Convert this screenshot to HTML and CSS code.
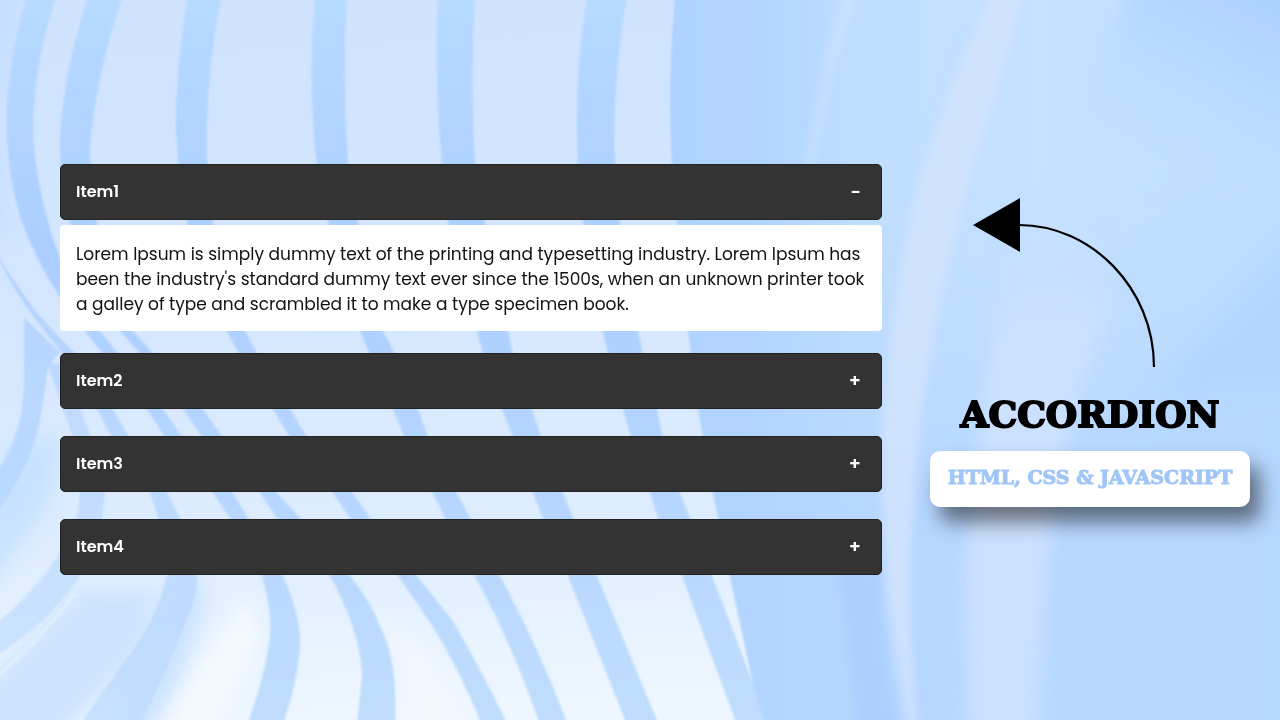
FILE: index.html
```html
<!DOCTYPE html>
<html lang="en">

<head>
    <meta charset="UTF-8">
    <meta name="viewport" content="width=device-width, initial-scale=1.0">
    <title>Accordion</title>
    <link rel="stylesheet" href="styles.css">
</head>

<body>
    <svg class="background" viewBox="0 0 1280 720" preserveAspectRatio="xMidYMid slice" aria-hidden="true">
        <defs>
            <linearGradient id="base" x1="0.1" y1="0" x2="0.2" y2="1">
                <stop offset="0" stop-color="#cfe3ff" />
                <stop offset="0.4" stop-color="#d4e6ff" />
                <stop offset="0.75" stop-color="#deedfe" />
                <stop offset="1" stop-color="#eef6ff" />
            </linearGradient>
            <linearGradient id="stripe" gradientUnits="userSpaceOnUse" x1="0" y1="0" x2="0" y2="720">
                <stop offset="0" stop-color="#b7daff" />
                <stop offset="0.35" stop-color="#abceff" />
                <stop offset="0.65" stop-color="#b5d5ff" />
                <stop offset="1" stop-color="#c0ddfd" />
            </linearGradient>
            <linearGradient id="sheet" gradientUnits="userSpaceOnUse" x1="670" y1="0" x2="1280" y2="0">
                <stop offset="0" stop-color="#afd3ff" />
                <stop offset="0.12" stop-color="#b0d3ff" />
                <stop offset="0.32" stop-color="#bfdeff" />
                <stop offset="0.6" stop-color="#c5e1ff" />
                <stop offset="1" stop-color="#c0dfff" />
            </linearGradient>
            <linearGradient id="sheetShade" x1="0" y1="0" x2="0.2" y2="1">
                <stop offset="0.4" stop-color="#b2d4ff" stop-opacity="0" />
                <stop offset="0.75" stop-color="#b2d4ff" stop-opacity="0.7" />
                <stop offset="1" stop-color="#b2d4ff" stop-opacity="0.7" />
            </linearGradient>
            <linearGradient id="corner" x1="1" y1="0" x2="0.5" y2="1">
                <stop offset="0" stop-color="#a9ceff" />
                <stop offset="0.4" stop-color="#b6d8ff" />
                <stop offset="0.9" stop-color="#c2dfff" stop-opacity="0" />
            </linearGradient>
            <linearGradient id="band" x1="0" y1="0" x2="0" y2="1">
                <stop offset="0" stop-color="#cce1ff" stop-opacity="0" />
                <stop offset="0.3" stop-color="#cce1ff" />
                <stop offset="1" stop-color="#cce1ff" />
            </linearGradient>
            <filter id="edge" x="-20%" y="-20%" width="140%" height="140%">
                <feGaussianBlur stdDeviation="1.2" />
            </filter>
            <filter id="soft" x="-30%" y="-30%" width="160%" height="160%">
                <feGaussianBlur stdDeviation="10" />
            </filter>
            <filter id="streak" x="-30%" y="-10%" width="160%" height="120%">
                <feGaussianBlur stdDeviation="5" />
            </filter>
        </defs>

        <rect width="1280" height="720" fill="url(#base)" />

        <!-- lower left folds -->
        <g filter="url(#soft)">
            <path fill="#bedeff" d="M-20 500 L20 440 L60 440 L50 500 L-20 600 Z" opacity="0.7" />
            <path fill="#cbe1ff" d="M-20 690 L80 590 L160 590 L140 650 L60 740 L-20 740 Z" opacity="0.9" />
            <path fill="#c4dfff" d="M185 560 L205 600 L180 680 L150 740 L110 740 L140 660 Z" opacity="0.8" />
            <path fill="#f4f9ff" d="M250 590 L262 640 L210 740 L150 740 L210 650 Z" />
            <path fill="#f4f9ff" d="M350 600 L430 650 L475 740 L405 740 L400 650 Z" opacity="0.8" />
            <path fill="#bfddff" d="M-20 -20 L20 -20 L-4 120 L10 240 L-20 220 Z" opacity="0.8" />
        </g>
        <path d="M0 674 Q40 640 75 594" fill="none" stroke="#e6f3ff" stroke-width="2" filter="url(#edge)" />

        <!-- curved stripes, left to right -->
        <g fill="url(#stripe)" filter="url(#edge)">
            <path d="M24 318 L60 352 L48 366 Q44 400 38 430 Q24 480 -10 520 L-10 480 Q24 440 24 380 Z" opacity="0.8" />
            <path d="M45 362 Q56 385 63 409 L72 434 Q80 464 80 493 L77 518 Q60 570 -10 630 L-10 660 Q70 610 100 540 L105 493 Q98 458 90 434 L80 409 L62 364 Z" opacity="0.65" />
            <path d="M-5 250 Q14 296 60 350 Q82 376 97 409 L110 434 L150 493 L158 518 Q170 550 167 576 Q155 625 125 660 L80 725 L140 725 Q170 665 188 615 Q198 595 197 576 Q192 545 180 518 L167 493 L127 434 L113 409 Q86 362 60 338 L36 312 Q12 280 -5 250 Z" opacity="0.85" />
            <path d="M27 -5 Q4 75 7 130 Q8 180 22 222 Q42 278 85 331 L100 350 L147 409 L163 434 L213 493 L230 518 Q254 550 262 576 Q275 620 268 650 Q262 685 247 725 L283 725 Q301 670 300 636 Q297 605 283 576 L248 518 L233 493 L180 434 L163 409 L115 350 L100 331 Q62 276 48 222 Q34 170 33 130 Q34 60 57 -5 Z" />
            <path d="M88 -5 Q62 80 60 140 Q60 190 70 222 Q86 280 120 331 L137 350 L183 409 L200 434 L260 493 L277 518 L330 576 Q360 630 362 675 L357 725 L395 725 Q398 660 380 626 Q370 600 350 576 L300 518 L277 493 L220 434 L203 409 L150 350 L133 331 Q106 280 97 222 Q90 190 90 150 Q95 80 123 -5 Z" />
            <path d="M188 -5 Q175 75 176 130 Q178 180 187 222 Q200 275 227 331 L237 350 L273 409 L288 434 L333 493 L350 518 L398 576 L430 622 Q460 670 482 725 L508 725 Q476 660 452 620 L417 576 L370 518 L353 493 L305 434 L290 409 L255 350 L245 331 Q220 270 213 222 Q206 170 207 130 Q208 60 222 -5 Z" />
            <path d="M315 -5 Q307 80 317 164 L328 222 Q340 275 360 331 L368 350 L393 409 L403 434 L433 493 L445 518 L475 576 Q515 650 540 725 L568 725 Q540 650 500 576 L470 518 L457 493 L427 434 L418 409 L393 350 L383 331 Q366 275 358 222 L348 164 Q342 80 347 -5 Z" />
            <path d="M438 -5 Q434 80 442 164 L448 222 Q460 275 477 331 L482 350 L502 409 L512 434 L533 493 L543 518 L568 576 L627 725 L659 725 L597 576 L573 518 L563 493 L540 434 L532 409 L512 350 L508 331 Q492 275 485 222 L475 164 Q470 80 475 -5 Z" />
            <path d="M587 -5 Q573 85 578 164 L583 222 Q590 275 603 331 L607 350 L623 409 L630 434 L650 493 L658 518 L682 576 L737 725 L790 725 L752 680 L712 576 L690 518 L680 493 L662 434 L657 409 L642 350 L638 331 Q626 275 620 222 L615 164 Q612 85 627 -5 Z" />
        </g>

        <!-- right hand sheet -->
        <g filter="url(#edge)">
            <path fill="url(#sheet)" d="M675 -5 Q667 90 672 164 L677 222 L688 331 L698 409 L713 493 L730 576 L752 680 L765 725 L1285 725 L1285 -5 Z" />
            <path fill="url(#sheetShade)" d="M675 -5 Q667 90 672 164 L677 222 L688 331 L698 409 L713 493 L730 576 L752 680 L765 725 L1285 725 L1285 -5 Z" />
        </g>
        <g filter="url(#streak)">
            <path fill="#d0e3ff" d="M994 -10 Q945 90 920 180 Q898 270 890 340 Q880 420 882 480 Q882 600 910 730 L918 730 Q905 600 914 500 Q918 420 932 350 Q948 250 978 150 Q1000 80 1025 -10 Z" opacity="0.9" />
            <path fill="#c9e2ff" d="M842 -10 L822 80 L802 180 L812 180 L832 80 L860 -10 Z" opacity="0.8" />
            <path fill="#a6caff" d="M838 560 L858 730 L900 730 Q880 650 880 560 Z" opacity="0.6" />
        </g>
        <g filter="url(#soft)">
            <path fill="url(#band)" d="M1045 180 Q1000 260 990 350 Q975 470 966 560 L968 740 L1038 740 Q1042 600 1052 520 Q1068 400 1110 320 Q1120 240 1045 180 Z" />
            <path fill="url(#corner)" d="M1136 -20 L1100 60 L1055 190 L1100 230 L1300 200 L1300 -20 Z" />
            <path fill="#b0d3ff" d="M1310 220 Q1240 300 1185 360 L1160 400 L1310 380 Z" opacity="0.8" />
        </g>
    </svg>

    <main class="page">
        <section class="accordion">
            <div class="item active">
                <button class="item-header" type="button" aria-expanded="true" aria-controls="panel1">
                    <span>Item1</span>
                    <span class="sign">-</span>
                </button>
                <div class="item-body" id="panel1">
                    <p>Lorem Ipsum is simply dummy text of the printing and typesetting industry. Lorem Ipsum has been the industry's standard dummy text ever since the 1500s, when an unknown printer took a galley of type and scrambled it to make a type specimen book.</p>
                </div>
            </div>
            <div class="item">
                <button class="item-header" type="button" aria-expanded="false">
                    <span>Item2</span>
                    <span class="sign">+</span>
                </button>
            </div>
            <div class="item">
                <button class="item-header" type="button" aria-expanded="false">
                    <span>Item3</span>
                    <span class="sign">+</span>
                </button>
            </div>
            <div class="item">
                <button class="item-header" type="button" aria-expanded="false">
                    <span>Item4</span>
                    <span class="sign">+</span>
                </button>
            </div>
        </section>

        <aside class="intro">
            <svg class="arrow" width="184" height="170" viewBox="0 0 184 170" aria-hidden="true">
                <path d="M0 27 L47 0 V54 Z" />
                <path d="M46 27 C118 27 181 90 181 169" fill="none" stroke="#000" stroke-width="2.2" />
            </svg>
            <h1>ACCORDION</h1>
            <p class="tag">HTML, CSS &amp; JAVASCRIPT</p>
        </aside>
    </main>

    <script>
        document.querySelectorAll(".item-header").forEach(function (header) {
            header.addEventListener("click", function () {
                const open = header.parentElement.classList.toggle("active");
                header.setAttribute("aria-expanded", open);
                header.querySelector(".sign").textContent = open ? "-" : "+";
            });
        });
    </script>
</body>

</html>
```
FILE: styles.css
```css
* {
    margin: 0;
    padding: 0;
    box-sizing: border-box;
}

body {
    min-height: 100vh;
    background: #cde2ff;
    font-family: Poppins, Inter, sans-serif;
}

.background {
    position: fixed;
    top: 0;
    left: 0;
    width: 100%;
    height: 100%;
    z-index: -1;
}

.page {
    display: grid;
    grid-template-columns: 1fr 320px;
    column-gap: 48px;
    align-items: start;
    padding: 164px 30px 0 60px;
}

.item {
    padding-bottom: 22px;
}

.item-header {
    display: flex;
    justify-content: space-between;
    align-items: center;
    width: 100%;
    padding: 16px 20px 16px 15px;
    margin-bottom: 5px;
    border: 1px solid #222;
    border-radius: 5px;
    background: #333;
    color: #fff;
    font-family: inherit;
    font-size: 16px;
    font-weight: 600;
    line-height: 22px;
    cursor: pointer;
}

.sign {
    font-size: 18px;
}

.item-body {
    display: none;
    padding: 17px 16px 14px;
    border-radius: 4px;
    background: #fff;
    color: #111;
    font-size: 17px;
    line-height: 25px;
}

.item.active .item-body {
    display: block;
}

.intro {
    display: flex;
    flex-direction: column;
    align-items: center;
    padding-top: 34px;
}

.arrow {
    align-self: flex-start;
    margin-left: 43px;
}

h1 {
    margin: 24px 0 14px;
    font-family: "Cooper Black", "DejaVu Serif", serif;
    font-size: 36px;
    font-weight: 900;
    line-height: 45px;
    -webkit-text-stroke: 2px #000;
}

.tag {
    width: 100%;
    padding: 14px 0 18px;
    border-radius: 10px;
    background: #fff;
    box-shadow: 10px 15px 20px rgba(0, 0, 0, 0.5);
    color: #a0c6f8;
    font-family: "Cooper Black", "DejaVu Serif", serif;
    font-size: 19px;
    font-weight: 900;
    line-height: 24px;
    text-align: center;
    -webkit-text-stroke: 1px #a0c6f8;
}
```
